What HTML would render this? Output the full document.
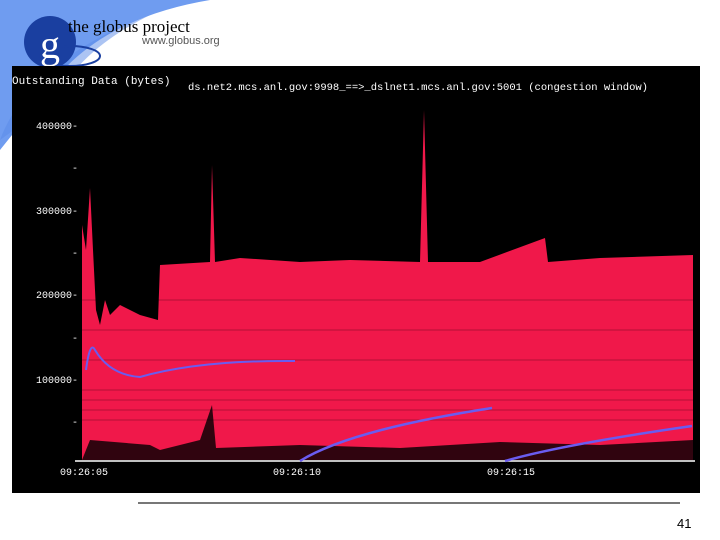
<!DOCTYPE html>
<html><head><style>
body{margin:0;width:720px;height:540px;background:#fff;position:relative;overflow:hidden;font-family:"Liberation Sans",sans-serif}
</style></head><body>
<svg width="720" height="540" style="position:absolute;left:0;top:0">
<path d="M0 0 H210 Q90 20 40 100 L0 150 Z" fill="#6f9cf0"/>
<path d="M0 140 Q30 60 150 15 Q80 50 55 100 Z" fill="#5a8ae8" opacity="0.5"/>
<circle cx="50" cy="42" r="26" fill="#1a3fa0"/>
<ellipse cx="70" cy="56" rx="30" ry="10" fill="none" stroke="#1a3fa0" stroke-width="2"/>
<text x="40" y="58" font-family="Liberation Serif,serif" font-size="40" fill="#fff">g</text>
<text x="68" y="32" font-family="Liberation Serif,serif" font-size="17" fill="#000">the globus project</text>
<text x="142" y="44" font-size="11" fill="#555">www.globus.org</text>
<rect x="12" y="66" width="688" height="427" fill="#000"/>
<text x="12" y="84" font-family="Liberation Mono,monospace" font-size="11" fill="#fff">Outstanding Data (bytes)</text>
<text x="188" y="90" font-family="Liberation Mono,monospace" font-size="10.5" fill="#fff">ds.net2.mcs.anl.gov:9998_==&gt;_dslnet1.mcs.anl.gov:5001 (congestion window)</text>
<g font-family="Liberation Mono,monospace" font-size="10" fill="#fff">
<text x="36" y="129">400000-</text><text x="72" y="171">-</text>
<text x="36" y="214">300000-</text><text x="72" y="256">-</text>
<text x="36" y="298">200000-</text><text x="72" y="341">-</text>
<text x="36" y="383">100000-</text><text x="72" y="425">-</text>
<text x="60" y="475">09:26:05</text><text x="273" y="475">09:26:10</text><text x="487" y="475">09:26:15</text>
</g>
<path d="M82 460 V225 L86 250 L90 188 L93 250 L96 310 L100 325 L105 300 L110 315 L120 305 L130 310 L140 315 L158 320 L160 265 L210 262 L212 165 L215 262 L240 258 L300 262 L350 260 L420 262 L424 110 L428 262 L480 262 L545 238 L548 262 L600 258 L693 255 V460 Z" fill="#f0184a"/>
<path d="M82 460 L90 440 L150 445 L160 450 L200 440 L212 405 L216 448 L300 445 L400 448 L500 442 L600 445 L693 440 V460 Z" fill="#000" opacity="0.8"/>
<g stroke="#000" stroke-width="1" opacity="0.25">
<line x1="82" y1="390" x2="693" y2="390"/><line x1="82" y1="400" x2="693" y2="400"/><line x1="82" y1="410" x2="693" y2="410"/><line x1="82" y1="420" x2="693" y2="420"/><line x1="82" y1="300" x2="693" y2="300"/><line x1="82" y1="330" x2="693" y2="330"/><line x1="82" y1="360" x2="693" y2="360"/>
</g>
<line x1="75" y1="461" x2="695" y2="461" stroke="#fff" stroke-width="1.5"/>
<path d="M86 370 Q90 340 95 350 Q110 375 140 377 Q200 360 295 361" fill="none" stroke="#6a5cf0" stroke-width="2"/>
<path d="M300 461 Q350 430 492 408" fill="none" stroke="#6a5cf0" stroke-width="2.5"/>
<path d="M505 461 Q560 445 692 426" fill="none" stroke="#6a5cf0" stroke-width="2.5"/>
<line x1="138" y1="503" x2="680" y2="503" stroke="#777" stroke-width="2"/>
<text x="677" y="528" font-size="13" fill="#000">41</text>
</svg>
</body></html>
